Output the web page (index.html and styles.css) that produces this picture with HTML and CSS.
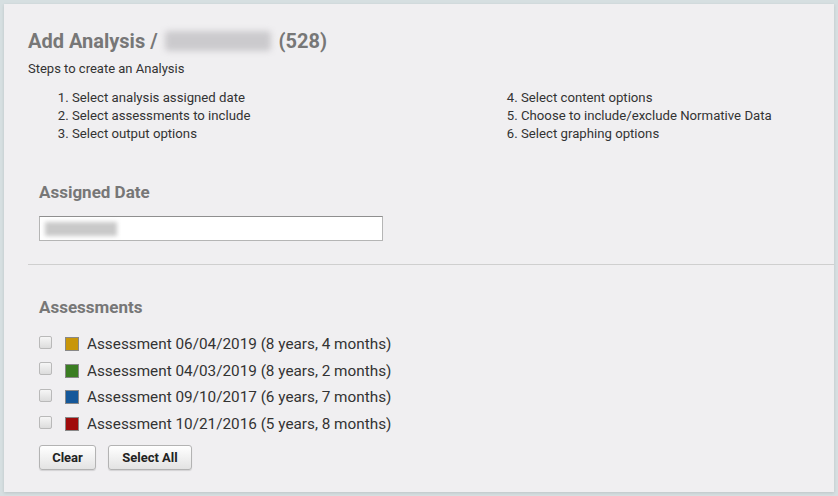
FILE: index.html
```html
<!DOCTYPE html>
<html>
<head>
<meta charset="utf-8">
<link rel="stylesheet" href="styles.css">
</head>
<body>
<div class="panel">
  <h1 class="title">Add Analysis / <span class="blur-name"></span> (528)</h1>
  <p class="intro">Steps to create an Analysis</p>
  <div class="steps">
    <ol class="steps-col" start="1">
      <li>Select analysis assigned date</li>
      <li>Select assessments to include</li>
      <li>Select output options</li>
    </ol>
    <ol class="steps-col" start="4">
      <li>Select content options</li>
      <li>Choose to include/exclude Normative Data</li>
      <li>Select graphing options</li>
    </ol>
  </div>
  <section class="section">
    <h2 class="section-title">Assigned Date</h2>
    <div class="date-input"><span class="blur-date"></span></div>
  </section>
  <hr class="divider">
  <section class="section">
    <h2 class="section-title">Assessments</h2>
    <ul class="assess-list">
      <li class="assess"><span class="cb"></span><span class="swatch gold"></span>Assessment 06/04/2019 (8 years, 4 months)</li>
      <li class="assess"><span class="cb"></span><span class="swatch green"></span>Assessment 04/03/2019 (8 years, 2 months)</li>
      <li class="assess"><span class="cb"></span><span class="swatch blue"></span>Assessment 09/10/2017 (6 years, 7 months)</li>
      <li class="assess"><span class="cb"></span><span class="swatch red"></span>Assessment 10/21/2016 (5 years, 8 months)</li>
    </ul>
    <div class="buttons">
      <button class="btn btn-clear">Clear</button>
      <button class="btn btn-all">Select All</button>
    </div>
  </section>
</div>
</body>
</html>
```
FILE: styles.css
```css
html, body {
  margin: 0;
  padding: 0;
}
body {
  background: #d6dfe1;
  font-family: Roboto, "Liberation Sans", sans-serif;
  color: #333;
  width: 838px;
  height: 496px;
  overflow: hidden;
}
.panel {
  margin: 4px 4px 0 4px;
  height: 488px;
  background: #f0eff1;
  box-shadow: 0 1px 3px rgba(0,0,0,0.12);
  padding: 0 0 0 24px;
  box-sizing: border-box;
  overflow: hidden;
}
.title {
  margin: 0;
  padding-top: 24px;
  font-size: 20px;
  line-height: 26px;
  font-weight: 700;
  color: #777;
  display: flex;
  align-items: center;
  white-space: pre;
}
.blur-name {
  display: inline-block;
  width: 106px;
  height: 20px;
  margin: 0 3px 0 2px;
  background: #cbcacd;
  filter: blur(3px);
  border-radius: 4px;
}
.intro {
  margin: 7px 0 0 0;
  font-size: 13px;
  line-height: 16px;
  color: #333;
}
.steps {
  display: flex;
  margin-top: 12px;
}
.steps-col {
  margin: 0;
  padding: 0 0 0 44px;
  width: 446px;
  box-sizing: border-box;
  font-size: 13.2px;
  line-height: 18px;
  color: #333;
}
.steps-col + .steps-col {
  padding-left: 47px;
  width: auto;
}
.section {
  padding-left: 11px;
}
.section-title {
  margin: 0;
  font-size: 17px;
  font-weight: 700;
  color: #777;
  line-height: 22px;
}
.steps + .section .section-title {
  margin-top: 38px;
}
.date-input {
  margin-top: 13px;
  width: 344px;
  height: 25px;
  box-sizing: border-box;
  background: #fff;
  border: 1px solid #b5b5b5;
  border-top-color: #8f8f8f;
  padding: 5px 0 0 5px;
}
.blur-date {
  display: block;
  width: 72px;
  height: 14px;
  background: #c9c9c9;
  filter: blur(2px);
}
.divider {
  margin: 23px 0 0 0;
  border: 0;
  border-top: 1px solid #cfcfcf;
  height: 0;
}
.divider + .section .section-title {
  margin-top: 31px;
}
.assess-list {
  list-style: none;
  margin: 13px 0 0 0;
  padding: 0;
}
.assess {
  display: flex;
  align-items: center;
  height: 26.6px;
  font-size: 15.3px;
  color: #333;
}
.cb {
  width: 11px;
  height: 11px;
  border: 1px solid #b9b9b9;
  border-radius: 2px;
  background: linear-gradient(#f6f6f6, #dcdcdc);
  margin-right: 13px;
  position: relative;
  top: -2px;
}
.swatch {
  width: 12px;
  height: 12px;
  border: 1px solid #888;
  margin-right: 8px;
}
.gold { background: #c8960a; }
.green { background: #3a7d22; }
.blue { background: #15589a; }
.red { background: #a00b0b; }
.buttons {
  display: flex;
  gap: 12px;
  margin-top: 8px;
}
.btn {
  height: 25px;
  border: 1px solid #b3b3b3;
  border-radius: 3px;
  background: linear-gradient(#ffffff, #e3e3e3);
  box-shadow: 0 1px 1px rgba(0,0,0,0.12);
  font-family: Roboto, "Liberation Sans", sans-serif;
  font-weight: 700;
  font-size: 13px;
  color: #222;
  padding: 0;
}
.btn-clear { width: 57px; }
.btn-all { width: 84px; }
```
